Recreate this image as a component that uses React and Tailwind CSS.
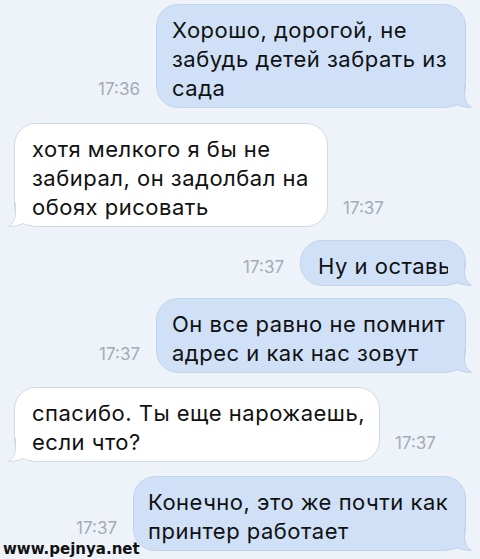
const FONT = { fontFamily: 'Inter, Roboto, sans-serif' };

const Tail = ({ incoming }) => {
  const fill = incoming ? '#ffffff' : '#cfe0f7';
  const stroke = incoming ? '#d3d9e1' : '#c2d4ec';
  return (
    <svg
      width="24"
      height="24"
      viewBox="0 0 24 24"
      className={
        incoming
          ? 'absolute left-[-7px] bottom-[-1px] -scale-x-100'
          : 'absolute right-[-7px] bottom-[-1px]'
      }
    >
      <path d="M0 0H17V10C17 17 20 21 24 23.5C19 24 13 23 9 21C6 22.5 3 23 0 23Z" fill={fill} />
      <path
        d="M16.5 0V10C16.5 17 19.5 21 23.5 23.3C19 23.6 13 22.5 9 20.5C6 22 3 22.6 0 22.6"
        fill="none"
        stroke={stroke}
        strokeWidth="1"
      />
    </svg>
  );
};

const Bubble = ({ incoming, lines, className = '' }) => (
  <div
    className={
      'relative rounded-[22px] border text-[22px] leading-[29px] tracking-[0.5px] text-[#111111] whitespace-nowrap pt-[11px] pb-[4px] ' +
      (incoming ? 'bg-white border-[#d3d9e1] ' : 'bg-[#cfe0f7] border-[#c2d4ec] ') +
      className
    }
  >
    {lines.map((l, i) => (
      <div key={i}>{l}</div>
    ))}
    <Tail incoming={incoming} />
  </div>
);

const Time = ({ t, className = 'mb-[10px]' }) => (
  <span className={'text-[17px] leading-none text-[#a4abb5] ' + className}>{t}</span>
);

const messages = [
  { out: true, time: '17:36', lines: ['Хорошо, дорогой, не', 'забудь детей забрать из', 'сада'], cls: 'w-[310px] pl-[15px]', row: 'mt-[4px]' },
  { out: false, time: '17:37', lines: ['хотя мелкого я бы не', 'забирал, он задолбал на', 'обоях рисовать'], cls: 'w-[314px] pl-[17px]', row: 'mt-[15px]' },
  { out: true, time: '17:37', lines: ['Ну и оставь'], cls: 'w-[166px] pl-[17px]', row: 'mt-[13px]' },
  { out: true, time: '17:37', lines: ['Он все равно не помнит', 'адрес и как нас зовут'], cls: 'w-[310px] pl-[15px]', row: 'mt-[12px]' },
  { out: false, time: '17:37', lines: ['спасибо. Ты еще нарожаешь,', 'если что?'], cls: 'w-[366px] pl-[17px]', row: 'mt-[14px]' },
  { out: true, time: '17:37', lines: ['Конечно, это же почти как', 'принтер работает'], cls: 'w-[333px] pl-[14px]', row: 'mt-[14px]', timeCls: 'mb-[14px]' },
];

export default function App() {
  return (
    <div className="relative w-full h-[559px] overflow-hidden bg-[#eef3fa]" style={FONT}>
      <div className="flex flex-col">
        {messages.map((m, i) =>
          m.out ? (
            <div key={i} className={'flex justify-end items-end gap-[16px] pr-[14px] ' + m.row}>
              <Time t={m.time} className={m.timeCls} />
              <Bubble lines={m.lines} className={m.cls} />
            </div>
          ) : (
            <div key={i} className={'flex justify-start items-end gap-[15px] pl-[14px] ' + m.row}>
              <Bubble incoming lines={m.lines} className={m.cls} />
              <Time t={m.time} />
            </div>
          )
        )}
      </div>
      <div
        className="absolute left-[3px] bottom-[2px] text-[15px] leading-none font-bold text-[#111111]"
        style={{ fontFamily: '"DejaVu Sans", Verdana, sans-serif' }}
      >
        www.pejnya.net
      </div>
    </div>
  );
}
